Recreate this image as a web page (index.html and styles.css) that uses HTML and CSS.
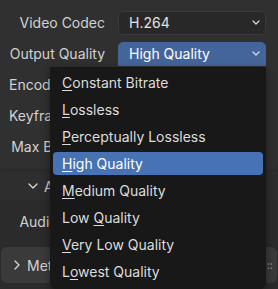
FILE: index.html
```html
<!DOCTYPE html>
<html lang="en">
<head>
    <meta charset="UTF-8">
    <title>Video Output Quality</title>
    <link rel="stylesheet" href="styles.css">
</head>
<body>
    <div class="editor">
        <div class="panel-video">
            <div class="row">
                <span class="label">Video Codec</span>
                <div class="dropdown">
                    <span>H.264</span>
                    <svg class="chev" width="8" height="5" viewBox="0 0 8 5"><path d="M1 1 L4 4 L7 1" /></svg>
                </div>
            </div>
            <div class="row">
                <span class="label">Output Quality</span>
                <div class="dropdown dropdown-open">
                    <span>High Quality</span>
                    <svg class="chev" width="8" height="5" viewBox="0 0 8 5"><path d="M1 1 L4 4 L7 1" /></svg>
                </div>
            </div>
            <div class="row">
                <span class="label">Encoding Speed</span>
            </div>
            <div class="row">
                <span class="label">Keyframe Interval</span>
            </div>
            <div class="row">
                <span class="label">Max B-frames</span>
            </div>
        </div>

        <div class="sub-header">
            <svg class="sub-chev" width="10" height="6" viewBox="0 0 10 6"><path d="M1 1 L5 5 L9 1" /></svg>
            <span>Audio</span>
        </div>
        <div class="panel-audio">
            <div class="row">
                <span class="label">Audio Codec</span>
            </div>
        </div>

        <div class="panel-header">
            <svg class="head-chev" width="6" height="10" viewBox="0 0 6 10"><path d="M1 1 L5 5 L1 9" /></svg>
            <span>Metadata</span>
            <span class="grip">::</span>
        </div>

        <div class="menu">
            <div class="item"><span><u>C</u>onstant Bitrate</span></div>
            <div class="item"><span><u>L</u>ossless</span></div>
            <div class="item"><span><u>P</u>erceptually Lossless</span></div>
            <div class="item item-active"><span><u>H</u>igh Quality</span></div>
            <div class="item"><span><u>M</u>edium Quality</span></div>
            <div class="item"><span>Low <u>Q</u>uality</span></div>
            <div class="item"><span><u>V</u>ery Low Quality</span></div>
            <div class="item"><span>L<u>o</u>west Quality</span></div>
        </div>
    </div>
</body>
</html>
```

FILE: styles.css
```css
body {
    margin: 0;
    background-color: #2b2b2b;
    font-family: Inter, "Noto Sans", sans-serif;
    font-size: 14px;
    color: #d2d2d2;
}
.editor {
    position: relative;
    width: 278px;
    height: 289px;
    overflow: hidden;
}
.panel-video {
    background-color: #303030;
    padding: 7px 0;
    border-radius: 0 0 4px 4px;
}
.row {
    display: flex;
    align-items: center;
    height: 31px;
}
.label {
    width: 96px;
    margin-left: 9px;
    text-align: right;
    white-space: nowrap;
    overflow: hidden;
    text-overflow: ellipsis;
    flex-shrink: 0;
}
.dropdown {
    display: flex;
    align-items: center;
    justify-content: space-between;
    box-sizing: border-box;
    width: 148px;
    height: 24px;
    margin-left: 13px;
    padding: 0 5px 0 10px;
    background-color: #282828;
    border: 1px solid #3b3b3b;
    border-radius: 5px;
    color: #e2e2e2;
}
.dropdown-open {
    background-color: #44659b;
    border-color: #44659b;
    border-radius: 5px 5px 0 0;
    color: #ffffff;
}
.chev path,
.sub-chev path,
.head-chev path {
    fill: none;
    stroke: #d8d8d8;
    stroke-width: 1.3;
    stroke-linecap: round;
    stroke-linejoin: round;
}
.sub-header {
    display: flex;
    align-items: center;
    height: 28px;
    margin-top: 3px;
    padding-left: 28px;
    gap: 6px;
    background-color: #2e2e2e;
}
.panel-audio {
    padding-top: 6px;
    height: 38px;
    box-sizing: border-box;
}
.panel-header {
    display: flex;
    align-items: center;
    height: 36px;
    margin: 9px 1px 0 1px;
    padding-left: 13px;
    gap: 7px;
    background-color: #3a3a3a;
    border-radius: 6px;
}
.grip {
    margin-left: auto;
    margin-right: 4px;
    color: #9a9a9a;
    font-size: 11px;
}
.menu {
    position: absolute;
    left: 50px;
    top: 67px;
    width: 216px;
    height: 222px;
    box-sizing: border-box;
    display: flex;
    flex-direction: column;
    gap: 4px;
    padding: 4px 3px 0;
    background-color: #181818;
    border-radius: 0 0 6px 6px;
    box-shadow: 0 3px 8px rgba(0, 0, 0, 0.45);
}
.item {
    display: flex;
    align-items: center;
    flex-shrink: 0;
    height: 23px;
    padding-left: 9px;
    border-radius: 4px;
    color: #dcdcdc;
    white-space: nowrap;
}
.item u {
    text-underline-offset: 2px;
    text-decoration-thickness: 1px;
}
.item-active {
    background-color: #4772b3;
    color: #ffffff;
}
```
